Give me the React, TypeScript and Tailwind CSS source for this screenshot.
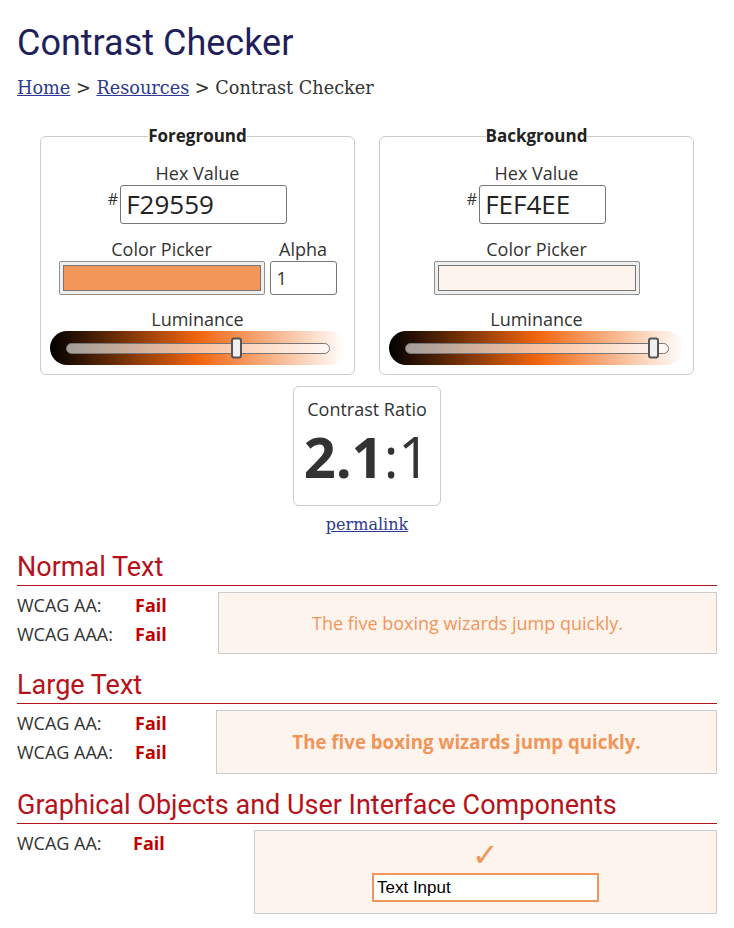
import React from "react";

function Swatch({ color }: { color: string }) {
  return (
    <div className="w-[206px] h-[34px] rounded-[2px] border border-[#8f8f8f] bg-[#efefef] p-[3px]">
      <div className="h-full w-full border border-[#767676]" style={{ backgroundColor: color }} />
    </div>
  );
}

function Slider({ thumbLeft }: { thumbLeft: "fg" | "bg" }) {
  return (
    <div className="mx-[9px] flex h-[34px] items-center rounded-full bg-[linear-gradient(to_right,#000000,#f0650e_50%,#ffffff)] pl-[16px] pr-[15px]">
      <div className="relative h-[11px] w-full rounded-full border border-[#767676] bg-[rgba(255,255,255,0.6)]">
        <div
          className={
            "absolute top-1/2 h-[21px] w-[11px] -translate-y-1/2 rounded-[3px] border-2 border-[#555] bg-[#efefef] " +
            (thumbLeft === "fg" ? "left-[164px]" : "left-[242px]")
          }
        />
      </div>
    </div>
  );
}

function Heading({ children }: { children: React.ReactNode }) {
  return (
    <h2 className="mt-[16px] border-b border-[#b3131b] pb-[3px] font-['Roboto',sans-serif] text-[27px] leading-[30px] text-[#b5121b]">
      {children}
    </h2>
  );
}

function Row({ label, w }: { label: string; w: string }) {
  return (
    <div className="flex leading-[29px]">
      <span className={w}>{label}</span>
      <span className="font-bold text-[#c00000]">Fail</span>
    </div>
  );
}

export default function App() {
  return (
    <div className="min-h-[928px] w-[734px] bg-white px-[17px] font-['Open_Sans',sans-serif] text-[18px] text-[#333]">
      <h1 className="pt-[22px] font-['Roboto',sans-serif] text-[36px] leading-[42px] text-[#1f1f5c]">
        Contrast Checker
      </h1>
      <div className="mt-[12px] font-['DejaVu_Serif',serif] text-[17.7px] leading-[24px] text-[#333]">
        <a className="text-[#2b3990] underline">Home</a> &gt;{" "}
        <a className="text-[#2b3990] underline">Resources</a> &gt; Contrast Checker
      </div>

      <div className="mt-[24px] flex justify-center gap-[24px]">
        {/* Foreground */}
        <fieldset className="w-[315px] rounded-[6px] border border-[#ccc] pb-[9px] text-center">
          <legend className="mx-auto px-0 text-[17px] font-bold leading-[24px] text-[#222]">Foreground</legend>
          <div className="mt-[13px] leading-[24px]">Hex Value</div>
          <div className="flex justify-center">
            <span className="mr-[2px] mt-[6px] text-[16px] leading-[16px]">#</span>
            <input
              readOnly
              value="F29559"
              className="h-[39px] w-[167px] rounded-[3px] border border-[#767676] px-[5px] text-[26px] text-[#222] outline-none"
            />
          </div>
          <div className="mt-[13px] flex justify-center gap-[5px]">
            <div className="flex flex-col items-center">
              <div className="leading-[24px]">Color Picker</div>
              <Swatch color="#f29559" />
            </div>
            <div className="flex flex-col items-center">
              <div className="leading-[24px]">Alpha</div>
              <input
                readOnly
                value="1"
                className="h-[34px] w-[67px] rounded-[3px] border border-[#767676] px-[6px] text-[18px] text-[#333] outline-none"
              />
            </div>
          </div>
          <div className="mt-[12px] leading-[24px]">Luminance</div>
          <Slider thumbLeft="fg" />
        </fieldset>

        {/* Background */}
        <fieldset className="w-[315px] rounded-[6px] border border-[#ccc] pb-[9px] text-center">
          <legend className="mx-auto px-0 text-[17px] font-bold leading-[24px] text-[#222]">Background</legend>
          <div className="mt-[13px] leading-[24px]">Hex Value</div>
          <div className="flex justify-center">
            <span className="mr-[2px] mt-[6px] text-[16px] leading-[16px]">#</span>
            <input
              readOnly
              value="FEF4EE"
              className="h-[39px] w-[127px] rounded-[3px] border border-[#767676] px-[5px] text-[26px] text-[#222] outline-none"
            />
          </div>
          <div className="mt-[13px] flex justify-center">
            <div className="flex flex-col items-center">
              <div className="leading-[24px]">Color Picker</div>
              <Swatch color="#fef4ee" />
            </div>
          </div>
          <div className="mt-[12px] leading-[24px]">Luminance</div>
          <Slider thumbLeft="bg" />
        </fieldset>
      </div>

      {/* Contrast ratio */}
      <div className="mx-auto mt-[11px] h-[120px] w-[148px] rounded-[6px] border border-[#ccc] pt-[10px] text-center">
        <div className="text-[18px] leading-[24px]">Contrast Ratio</div>
        <div className="mt-[7px] text-[56px] leading-[56px] text-[#333]">
          <span className="font-bold">2.1</span>:1
        </div>
      </div>
      <div className="mt-[7px] text-center font-['DejaVu_Serif',serif] text-[16px] leading-[24px]">
        <a className="text-[#2b3990] underline">permalink</a>
      </div>

      {/* Normal Text */}
      <div className="-mt-[1px]">
        <Heading>Normal Text</Heading>
        <div className="mt-[6px] flex">
          <div className="-mt-[1px] flex-1">
            <Row label="WCAG AA:" w="w-[118px]" />
            <Row label="WCAG AAA:" w="w-[118px]" />
          </div>
          <div className="flex h-[62px] w-[499px] items-center justify-center border border-[#ccc] bg-[#fef4ee] text-[18px] text-[#f29559]">
            The five boxing wizards jump quickly.
          </div>
        </div>
      </div>

      {/* Large Text */}
      <Heading>Large Text</Heading>
      <div className="mt-[6px] flex">
        <div className="-mt-[1px] flex-1">
          <Row label="WCAG AA:" w="w-[118px]" />
          <Row label="WCAG AAA:" w="w-[118px]" />
        </div>
        <div className="flex h-[64px] w-[501px] items-center justify-center border border-[#ccc] bg-[#fef4ee] text-[18.7px] font-bold text-[#f29559]">
          The five boxing wizards jump quickly.
        </div>
      </div>

      {/* Graphical */}
      <Heading>Graphical Objects and User Interface Components</Heading>
      <div className="mt-[6px] flex">
        <div className="-mt-[1px] flex-1">
          <Row label="WCAG AA:" w="w-[116px]" />
        </div>
        <div className="flex h-[84px] w-[463px] flex-col items-center border border-[#ccc] bg-[#fef4ee]">
          <span className="mt-[8px] font-['DejaVu_Sans',sans-serif] text-[32px] font-bold leading-[32px] text-[#f29559]">✓</span>
          <input
            readOnly
            value="Text Input"
            className="mt-[2px] h-[29px] w-[227px] border-2 border-[#f29559] bg-white px-[3px] font-['Liberation_Sans',sans-serif] text-[17px] text-black outline-none"
          />
        </div>
      </div>
    </div>
  );
}
